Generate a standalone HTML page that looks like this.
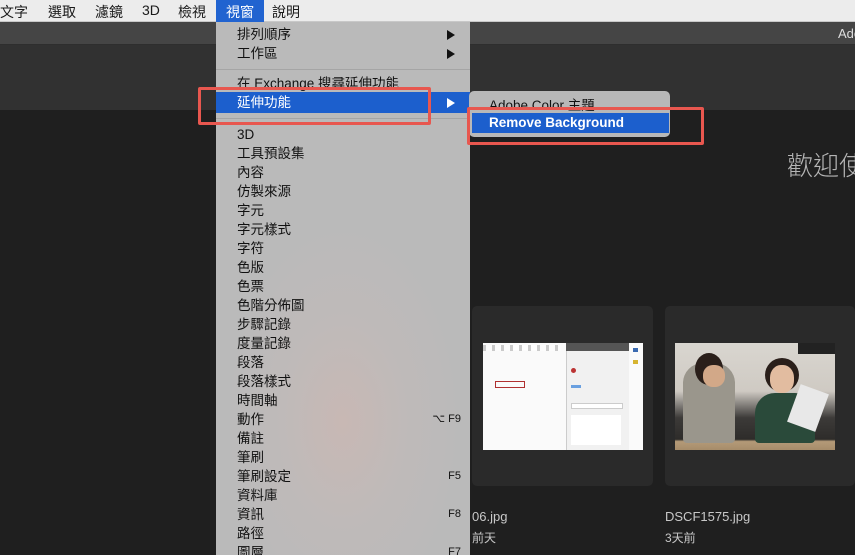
<!DOCTYPE html>
<html><head><meta charset="utf-8"><style>
*{margin:0;padding:0;box-sizing:border-box}
html,body{width:855px;height:555px;overflow:hidden}
body{position:relative;background:#1f1f1f;font-family:"Liberation Sans","Noto Sans CJK TC",sans-serif}
.abs{position:absolute;white-space:nowrap}
#mb{left:0;top:0;width:855px;height:22px;background:#ececec;border-bottom:1px solid #c8c8c8}
#mb span{position:absolute;top:2px;font-size:14px;color:#1a1a1a}
#title{left:0;top:22px;width:855px;height:23px;background:#454545;border-bottom:1px solid #2e2e2e}
#tool{left:0;top:45px;width:855px;height:65px;background:#313131}
#menu{left:216px;top:22px;width:254px;height:533px;background:radial-gradient(ellipse 120px 200px at 50% 75%,#c8b8b4 0%,#bfbab9 50%,#bababa 100%);}
.it{position:absolute;left:21px;font-size:13.5px;color:#111;line-height:19px}
.sc{position:absolute;right:9px;font-size:11px;color:#111;line-height:19px}
.ar{position:absolute;left:231px;width:0;height:0;border-left:8px solid #111;border-top:5px solid transparent;border-bottom:5px solid transparent}
.sep{position:absolute;left:0;width:254px;height:1px;background:#a5a5a5}
.red{border:3px solid #e8574f;border-radius:2px}
.card{background:#2a2a2a;border-radius:5px}
.lbl{color:#c8c8c8;font-size:13px}
</style></head><body>
<div id="mb" class="abs">
<span style="left:0">文字</span><span style="left:48px">選取</span><span style="left:95px">濾鏡</span><span style="left:142px">3D</span><span style="left:178px">檢視</span>
<div class="abs" style="left:216px;top:0;width:48px;height:22px;background:#2163d0"></div>
<span style="left:226px;color:#fff">視窗</span><span style="left:272px">說明</span>
</div>
<div id="title" class="abs"><span class="abs" style="left:838px;top:4px;font-size:13px;color:#ddd">Ado</span></div>
<div id="tool" class="abs"></div>
<div class="abs" style="left:787px;top:146px;font-size:26px;color:#b5b5b5;font-weight:300">歡迎使</div>

<div class="abs card" style="left:472px;top:306px;width:181px;height:180px"></div>
<div class="abs card" style="left:665px;top:306px;width:190px;height:180px"></div>
<div class="abs" style="left:483px;top:343px;width:160px;height:107px;background:#fafafa">
 <div class="abs" style="left:0;top:2px;width:78px;height:6px;background:repeating-linear-gradient(90deg,#999 0 3px,#fff 3px 9px);opacity:.5"></div>
 <div class="abs" style="left:12px;top:38px;width:30px;height:7px;border:1px solid #b03030"></div>
 <div class="abs" style="left:83px;top:0;width:63px;height:107px;background:#f1f1f1;border-left:1px solid #ccc"></div>
 <div class="abs" style="left:83px;top:0;width:63px;height:8px;background:#555"></div>
 <div class="abs" style="left:88px;top:25px;width:5px;height:5px;background:#b33;border-radius:50%"></div>
 <div class="abs" style="left:88px;top:42px;width:10px;height:3px;background:#6aa0e0"></div>
 <div class="abs" style="left:88px;top:60px;width:52px;height:6px;border:1px solid #ccc;background:#fff"></div>
 <div class="abs" style="left:88px;top:72px;width:50px;height:30px;background:#fff"></div>
 <div class="abs" style="left:150px;top:5px;width:5px;height:4px;background:#3a6ab0"></div>
 <div class="abs" style="left:150px;top:17px;width:5px;height:4px;background:#d6b430"></div>
</div>
<div class="abs" style="left:675px;top:343px;width:160px;height:107px;background:linear-gradient(180deg,#d9d6d0 0%,#cfcac3 45%,#3c3a38 70%,#2e2c2a 90%,#b49a78 92%,#a68c6a 100%)">
 <div class="abs" style="left:123px;top:0;width:37px;height:11px;background:#222"></div>
 <div class="abs" style="left:8px;top:20px;width:52px;height:80px;background:#9a968c;border-radius:20px 20px 4px 4px"></div>
 <div class="abs" style="left:20px;top:10px;width:28px;height:32px;background:#2a1f1a;border-radius:50%"></div>
 <div class="abs" style="left:28px;top:22px;width:22px;height:22px;background:#d2a888;border-radius:45%"></div>
 <div class="abs" style="left:80px;top:50px;width:60px;height:50px;background:#2a4a3a;border-radius:20px 20px 4px 4px"></div>
 <div class="abs" style="left:90px;top:15px;width:34px;height:34px;background:#2a1f1a;border-radius:50%"></div>
 <div class="abs" style="left:95px;top:22px;width:24px;height:28px;background:#e2bca0;border-radius:45%"></div>
 <div class="abs" style="left:118px;top:45px;width:30px;height:40px;background:#e8e8e8;transform:rotate(20deg)"></div>
</div>
<div class="abs lbl" style="left:472px;top:509px">06.jpg</div>
<div class="abs lbl" style="left:472px;top:529px;font-size:12px">前天</div>
<div class="abs lbl" style="left:665px;top:509px">DSCF1575.jpg</div>
<div class="abs lbl" style="left:665px;top:529px;font-size:12px">3天前</div>

<div id="menu" class="abs">
 <div class="it" style="top:3px">排列順序</div><div class="ar" style="top:8px"></div>
 <div class="it" style="top:22px">工作區</div><div class="ar" style="top:27px"></div>
 <div class="sep" style="top:47px"></div>
 <div class="it" style="top:52px">在 Exchange 搜尋延伸功能</div>
 <div class="abs" style="left:0;top:70px;width:254px;height:21px;background:#1c5fcd"></div>
 <div class="it" style="top:71px;color:#fff">延伸功能</div>
 <div class="ar" style="top:76px;border-left-color:#fff"></div>
 <div class="sep" style="top:96px"></div>
 <div class="it" style="top:103px">3D</div>
 <div class="it" style="top:122px">工具預設集</div>
 <div class="it" style="top:141px">內容</div>
 <div class="it" style="top:160px">仿製來源</div>
 <div class="it" style="top:179px">字元</div>
 <div class="it" style="top:198px">字元樣式</div>
 <div class="it" style="top:217px">字符</div>
 <div class="it" style="top:236px">色版</div>
 <div class="it" style="top:255px">色票</div>
 <div class="it" style="top:274px">色階分佈圖</div>
 <div class="it" style="top:293px">步驟記錄</div>
 <div class="it" style="top:312px">度量記錄</div>
 <div class="it" style="top:331px">段落</div>
 <div class="it" style="top:350px">段落樣式</div>
 <div class="it" style="top:369px">時間軸</div>
 <div class="it" style="top:388px">動作</div><div class="sc" style="top:388px">⌥ F9</div>
 <div class="it" style="top:407px">備註</div>
 <div class="it" style="top:426px">筆刷</div>
 <div class="it" style="top:445px">筆刷設定</div><div class="sc" style="top:445px">F5</div>
 <div class="it" style="top:464px">資料庫</div>
 <div class="it" style="top:483px">資訊</div><div class="sc" style="top:483px">F8</div>
 <div class="it" style="top:502px">路徑</div>
 <div class="it" style="top:521px">圖層</div><div class="sc" style="top:521px">F7</div>
</div>

<div class="abs" style="left:469px;top:91px;width:201px;height:46px;background:#b8b8b8;border-radius:5px"></div>
<div class="abs" style="left:489px;top:94px;font-size:13.5px;color:#111">Adobe Color 主題</div>
<div class="abs" style="left:472px;top:113px;width:197px;height:20px;background:#1c5fcd"></div>
<div class="abs" style="left:489px;top:115px;font-size:13.5px;color:#fff;font-weight:bold">Remove Background</div>

<div class="abs red" style="left:198px;top:87px;width:233px;height:38px"></div>
<div class="abs red" style="left:467px;top:107px;width:237px;height:38px"></div>
</body></html>
